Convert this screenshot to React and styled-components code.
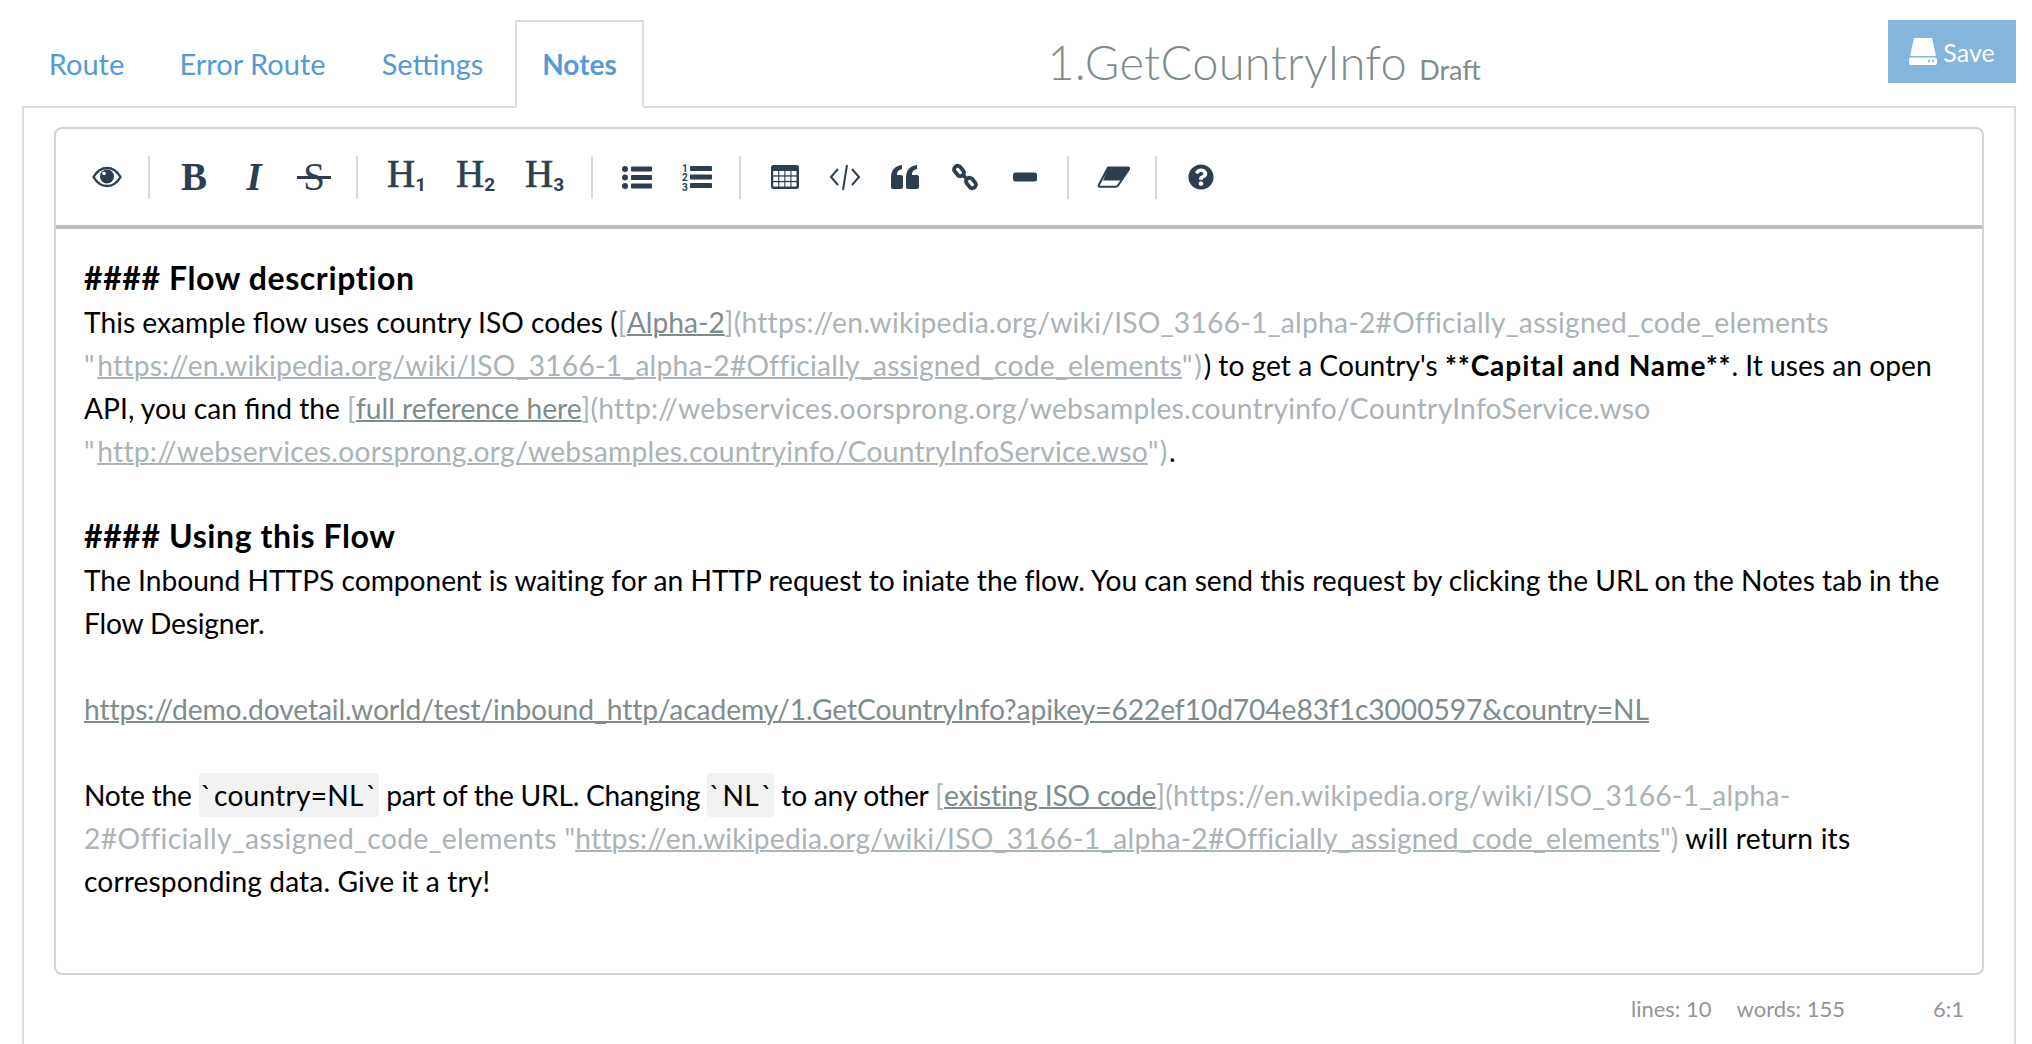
import React from 'react'
import styled, { createGlobalStyle } from 'styled-components'
import { FaQuestionCircle } from 'react-icons/fa'

const Global = createGlobalStyle`
  html, body {
    margin: 0;
    height: 1044px;
    overflow: hidden;
    background: #fff;
    font-family: "Lato", "Liberation Sans", sans-serif;
  }
`

const Header = styled.header`
  display: flex;
  align-items: flex-start;
  height: 106px;
  padding: 20px 16px 0 21px;
  box-sizing: border-box;
`

const Tabs = styled.nav`
  display: flex;
  height: 88px;
  position: relative;
  z-index: 1;
`

const Tab = styled.a`
  box-sizing: border-box;
  width: ${p => p.$w}px;
  margin-left: ${p => p.$ml || 0}px;
  padding-bottom: ${p => (p.$active ? 0 : 2)}px;
  display: flex;
  align-items: center;
  justify-content: center;
  font-size: ${p => (p.$active ? 28 : 29)}px;
  color: #559ad6;
  font-weight: ${p => (p.$active ? 700 : 400)};
  border: 2px solid ${p => (p.$active ? '#dcdfe0' : 'transparent')};
  border-bottom: 2px solid ${p => (p.$active ? '#fff' : 'transparent')};
  background: ${p => (p.$active ? '#fff' : 'transparent')};
`

const TitleWrap = styled.div`
  flex: 1;
  display: flex;
  justify-content: center;
  align-items: baseline;
  gap: 12px;
  padding: 13px 4px 0 0;
  color: #7f8c8d;
`

const Title = styled.h1`
  margin: 0;
  font-size: 47px;
  line-height: 58px;
  font-weight: 300;
  letter-spacing: 0.3px;
`

const Draft = styled.span`
  font-size: 27px;
`

const SaveButton = styled.button`
  width: 128px;
  height: 63px;
  border: 0;
  background: #84b5dd;
  color: #fff;
  font: 400 25px "Lato", sans-serif;
  display: flex;
  align-items: center;
  justify-content: center;
  gap: 6px;
  padding: 0;
`

const Panel = styled.main`
  box-sizing: border-box;
  margin: 0 16px 0 22px;
  height: 1000px;
  padding: 19px 30px 0;
  border: 2px solid #dcdfe0;
`

const Editor = styled.section`
  border: 2px solid #ced4da;
  border-radius: 8px;
  height: 848px;
  box-sizing: border-box;
`

const Toolbar = styled.div`
  display: flex;
  align-items: center;
  height: 100px;
  padding: 0 0 0 20px;
  box-sizing: border-box;
  border-bottom: 4px solid #bbbfc0;
  color: #2c3e50;
`

const Tool = styled.span`
  box-sizing: border-box;
  width: ${p => p.$w || 60}px;
  padding-left: 2px;
  flex: none;
  display: flex;
  justify-content: center;
  align-items: center;
  height: 44px;
  color: #2c3e50;
`

const Sep = styled.i`
  flex: none;
  width: 2px;
  height: 43px;
  margin: 0 13px;
  background: #d9d9d9;
`

const Glyph = styled.span`
  font-family: "Liberation Serif", serif;
  font-size: 39px;
  line-height: 44px;
  font-weight: 700;
  font-style: ${p => (p.$italic ? 'italic' : 'normal')};
`

const StrikeGlyph = styled.span`
  position: relative;
  font-family: "Liberation Serif", serif;
  font-size: 39px;
  line-height: 44px;
  font-weight: 400;
  &::after {
    content: '';
    position: absolute;
    left: -6px;
    right: -6px;
    top: 21px;
    height: 3px;
    background: #2c3e50;
  }
`

const HeadingGlyph = styled.span`
  font-family: "Liberation Serif", serif;
  font-size: 39px;
  line-height: 44px;
  font-weight: 400;
  white-space: nowrap;
  padding-top: 5px;
  -webkit-text-stroke: 0.7px #2c3e50;
`

const Sub = styled.span`
  font-family: "Roboto", sans-serif;
  font-size: 19px;
  font-weight: 700;
  vertical-align: -4px;
  -webkit-text-stroke: 0;
`

const Body = styled.div`
  padding: 29px 0 0 28px;
  font-size: 28.2px;
  line-height: 43px;
  color: #000;
  b {
    letter-spacing: 0.85px;
  }
`

const Line = styled.div`
  height: 43px;
  white-space: nowrap;
  letter-spacing: ${p => p.$ls || 0}px;
`

const H4 = styled(Line)`
  font-weight: 700;
  font-size: 32px;
  line-height: 39px;
  letter-spacing: 0.6px;
`

const Muted = styled.span`
  color: #aab3b5;
  letter-spacing: ${p => (p.$ls === undefined ? 0.25 : p.$ls)}px;
`

const MutedLink = styled.a`
  color: #aab3b5;
  letter-spacing: ${p => (p.$ls === undefined ? 0.22 : p.$ls)}px;
  text-decoration: underline;
  text-decoration-thickness: 2px;
`

const TextLink = styled.a`
  color: #7f8c8d;
  letter-spacing: ${p => p.$ls || 0}px;
  text-decoration: underline;
  text-decoration-thickness: 2px;
`

const Code = styled.code`
  font: inherit;
  background: #f2f2f2;
  padding: 5px ${p => (p.$tick ? 2 : 0)}px;
  letter-spacing: 0.2px;
  border-radius: ${p => p.$radius || '0'};
`

const Status = styled.footer`
  display: flex;
  justify-content: flex-end;
  align-items: center;
  height: 66px;
  padding-right: 20px;
  font-size: 22px;
  color: #959495;
`

const StatusItem = styled.span`
  margin-left: ${p => p.$ml}px;
`

const Eye = () => (
  <svg width="30" height="22" viewBox="0 0 30 22">
    <path d="M1.5 11C5 5 10 2 15 2s10 3 13.5 9C25 17 20 20 15 20S5 17 1.5 11z" fill="none" stroke="currentColor" strokeWidth="2.4" />
    <circle cx="15" cy="10.5" r="7" fill="currentColor" />
    <circle cx="12" cy="7.5" r="1.8" fill="#fff" />
  </svg>
)

const ListUl = () => (
  <svg width="30" height="23" viewBox="0 0 30 23" fill="currentColor">
    <circle cx="3" cy="3" r="3" />
    <circle cx="3" cy="11.500" r="3" />
    <circle cx="3" cy="20" r="3" />
    <rect x="9" y="0.500" width="21" height="5" rx="0.800" />
    <rect x="9" y="9" width="21" height="5" rx="0.800" />
    <rect x="9" y="17.500" width="21" height="5" rx="0.800" />
  </svg>
)

const ListOl = () => (
  <svg width="30" height="28" viewBox="0 0 30 28" fill="currentColor">
    <text x="0" y="8.500" fontFamily="Roboto, sans-serif" fontWeight="700" fontSize="10">1</text>
    <text x="0" y="18" fontFamily="Roboto, sans-serif" fontWeight="700" fontSize="10">2</text>
    <text x="0" y="27.500" fontFamily="Roboto, sans-serif" fontWeight="700" fontSize="10">3</text>
    <rect x="8" y="3" width="22" height="5" rx="0.800" />
    <rect x="8" y="11.500" width="22" height="5" rx="0.800" />
    <rect x="8" y="20" width="22" height="5" rx="0.800" />
  </svg>
)

const TableIcon = () => (
  <svg width="28" height="24" viewBox="0 0 28 24">
    <rect width="28" height="24" rx="2.500" fill="currentColor" />
    {[0, 1, 2].map(r =>
      [0, 1, 2, 3].map(c => (
        <rect key={`${r}-${c}`} x={2.200 + c * 6.100} y={6 + r * 5.600} width="5" height="4.300" fill="#fff" />
      ))
    )}
  </svg>
)

const Quote = () => (
  <svg width="28" height="24" viewBox="0 0 28 24" fill="currentColor">
    <path d="M0 13C0 6 3 1 11 0v4C7 5 6 7 6 10h4c1.500 0 2 1 2 2v10c0 1-.5 2-2 2H2c-1.500 0-2-1-2-2z" />
    <path d="M15 13c0-7 3-12 11-13v4c-4 1-5 3-5 6h5c1.500 0 2 1 2 2v10c0 1-.5 2-2 2h-9c-1.500 0-2-1-2-2z" />
  </svg>
)

const Chain = () => (
  <svg width="28" height="28" viewBox="0 0 28 28" fill="none" stroke="currentColor" strokeWidth="3.800">
    <rect x="2.500" y="4.500" width="11" height="7" rx="3" transform="rotate(50 8 8)" />
    <rect x="14.500" y="16.500" width="11" height="7" rx="3" transform="rotate(50 20 20)" />
    <path d="M11 11l6 6" />
  </svg>
)

const Rule = () => (
  <svg width="24" height="10" viewBox="0 0 24 10">
    <rect width="24" height="9" y="0.500" rx="2.500" fill="currentColor" />
  </svg>
)

const CodeIcon = () => (
  <svg width="32" height="28" viewBox="0 0 32 28" fill="none" stroke="currentColor" strokeWidth="2">
    <path d="M9 6l-7 8 7 8M23 6l7 8-7 8M18 2l-4 25" />
  </svg>
)

const Eraser = () => (
  <svg width="33" height="22" viewBox="0 0 33 22">
    <path d="M11 1.500H31c1 0 1.500.8 1 1.700L21 19.500c-.5.8-1.200 1.200-2 1.200H3c-1.200 0-1.800-.8-1.200-1.800z" fill="#fff" stroke="currentColor" strokeWidth="2" />
    <path d="M11 1.500H31c1 0 1.500.8 1 1.700L24 14.500H6z" fill="currentColor" />
  </svg>
)

const Drive = () => (
  <svg width="28" height="27" viewBox="0 0 28 27" fill="#fff">
    <path d="M5 0h18l4 18H1z" />
    <rect y="19.500" width="28" height="7.500" rx="2" />
    <circle cx="20" cy="23.200" r="1.100" fill="#84b5dd" />
    <circle cx="24" cy="23.200" r="1.100" fill="#84b5dd" />
  </svg>
)

const url = 'https://en.wikipedia.org/wiki/ISO_3166-1_alpha-2#Officially_assigned_code_elements'
const wso = 'http://webservices.oorsprong.org/websamples.countryinfo/CountryInfoService.wso'

export default function App() {
  return (
    <>
      <Global />
      <Header>
        <Tabs>
          <Tab $w={131}>Route</Tab>
          <Tab $w={201}>Error Route</Tab>
          <Tab $w={159}>Settings</Tab>
          <Tab $w={129} $ml={3} $active>Notes</Tab>
        </Tabs>
        <TitleWrap>
          <Title>1.GetCountryInfo</Title>
          <Draft>Draft</Draft>
        </TitleWrap>
        <SaveButton><Drive />Save</SaveButton>
      </Header>
      <Panel>
        <Editor>
          <Toolbar>
            <Tool $w={59}><Eye /></Tool>
            <Sep />
            <Tool><Glyph>B</Glyph></Tool>
            <Tool><Glyph $italic>I</Glyph></Tool>
            <Tool><StrikeGlyph>S</StrikeGlyph></Tool>
            <Sep />
            <Tool $w={69}><HeadingGlyph>H<Sub>1</Sub></HeadingGlyph></Tool>
            <Tool $w={69}><HeadingGlyph>H<Sub>2</Sub></HeadingGlyph></Tool>
            <Tool $w={69}><HeadingGlyph>H<Sub>3</Sub></HeadingGlyph></Tool>
            <Sep />
            <Tool><ListUl /></Tool>
            <Tool><ListOl /></Tool>
            <Sep />
            <Tool><TableIcon /></Tool>
            <Tool><CodeIcon /></Tool>
            <Tool><Quote /></Tool>
            <Tool><Chain /></Tool>
            <Tool><Rule /></Tool>
            <Sep />
            <Tool><Eraser /></Tool>
            <Sep />
            <Tool><FaQuestionCircle size={26} /></Tool>
          </Toolbar>
          <Body>
            <H4>#### Flow description</H4>
            <Line>This example flow uses country ISO codes (<Muted>[</Muted><TextLink>Alpha-2</TextLink><Muted>]({url}</Muted></Line>
            <Line><Muted $ls={2.8}>"</Muted><MutedLink>{url}</MutedLink><Muted $ls={1.8}>")</Muted>) to get a Country's <b>**Capital and Name**</b>. It uses an open</Line>
            <Line>API, you can find the <Muted>[</Muted><TextLink>full reference here</TextLink><Muted $ls={0.28}>]({wso}</Muted></Line>
            <Line><Muted $ls={2.8}>"</Muted><MutedLink $ls={0.26}>{wso}</MutedLink><Muted $ls={1.5}>")</Muted>.</Line>
            <Line />
            <H4>#### Using this Flow</H4>
            <Line $ls={-0.03}>The Inbound HTTPS component is waiting for an HTTP request to iniate the flow. You can send this request by clicking the URL on the Notes tab in the</Line>
            <Line $ls={-0.18}>Flow Designer.</Line>
            <Line />
            <Line><TextLink $ls={-0.09}>https://demo.dovetail.world/test/inbound_http/academy/1.GetCountryInfo?apikey=622ef10d704e83f1c3000597&amp;country=NL</TextLink></Line>
            <Line />
            <Line $ls={-0.26}>Note the <Code $tick $radius="4px 0 0 4px">`</Code><Code>country=NL</Code><Code $tick $radius="0 4px 4px 0">`</Code> part of the URL. Changing <Code $tick $radius="4px 0 0 4px">`</Code><Code>NL</Code><Code $tick $radius="0 4px 4px 0">`</Code> to any other <Muted>[</Muted><TextLink $ls={-0.15}>existing ISO code</TextLink><Muted>](https://en.wikipedia.org/wiki/ISO_3166-1_alpha-</Muted></Line>
            <Line $ls={0.2}><Muted $ls={0.34}>2#Officially_assigned_code_elements "</Muted><MutedLink>{url}</MutedLink><Muted>")</Muted> will return its</Line>
            <Line $ls={0.1}>corresponding data. Give it a try!</Line>
          </Body>
        </Editor>
        <Status>
          <span>lines: 10</span>
          <StatusItem $ml={25}>words: 155</StatusItem>
          <StatusItem $ml={88}>6:1</StatusItem>
        </Status>
      </Panel>
    </>
  )
}
